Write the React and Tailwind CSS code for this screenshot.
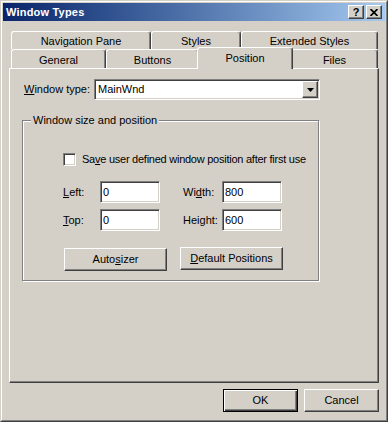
import React from "react";

const raised =
  "border border-t-white border-l-white border-r-[#404040] border-b-[#404040] shadow-[inset_-1px_-1px_0_#808080]";
const sunken =
  "border border-t-[#808080] border-l-[#808080] border-r-white border-b-white shadow-[inset_1px_1px_0_#404040,inset_-1px_-1px_0_#d4d0c8]";

function U({ children }) {
  return <span className="underline underline-offset-[1px] decoration-1">{children}</span>;
}

function Tab({ className, children }) {
  return (
    <div
      className={`${className} flex items-center justify-center pt-[2px] border-l border-t border-r border-l-white border-t-white border-r-[#404040] shadow-[inset_-1px_0_0_#808080] rounded-t-[3px]`}
    >
      {children}
    </div>
  );
}

function Btn({ className, children }) {
  return (
    <div className={`${className} h-[23px] bg-[#d4d0c8] ${raised} flex items-center justify-center`}>
      {children}
    </div>
  );
}

function Edit({ value }) {
  return (
    <div className={`w-[60px] h-[22px] bg-white ${sunken} flex items-center pl-[2px]`}>{value}</div>
  );
}

export default function App() {
  return (
    <div className="w-[388px] h-[422px] bg-[#d4d0c8] border border-t-[#d4d0c8] border-l-[#d4d0c8] border-r-[#404040] border-b-[#404040] font-['Liberation_Sans',Arial,sans-serif] text-[11px] leading-[13px] text-black select-none">
      <div className="h-full border border-t-white border-l-white border-r-[#808080] border-b-[#808080] p-px flex flex-col">
        {/* Title bar */}
        <div className="h-[18px] shrink-0 flex items-center bg-linear-to-r from-[#0a246a] to-[#a6caf0] pl-[3px] pr-[3px]">
          <span className="flex-1 font-bold text-white text-[11px] tracking-[0.2px]">Window Types</span>
          <div className={`w-[16px] h-[14px] bg-[#d4d0c8] ${raised} flex items-center justify-center font-bold text-[11px] leading-none`}>
            ?
          </div>
          <div className={`ml-[2px] w-[16px] h-[14px] bg-[#d4d0c8] ${raised} flex items-center justify-center`}>
            <svg width="8" height="7" viewBox="0 0 8 7">
              <path d="M0.5 0 L7.5 7 M7.5 0 L0.5 7" stroke="black" strokeWidth="1.7" />
            </svg>
          </div>
        </div>

        {/* Tabs row 1 */}
        <div className="mt-[10px] ml-[8px] flex h-[18px] shrink-0">
          <Tab className="w-[140px] h-[18px]">Navigation Pane</Tab>
          <Tab className="w-[90px] h-[18px]">Styles</Tab>
          <Tab className="w-[137px] h-[18px]">Extended Styles</Tab>
        </div>
        {/* Tabs row 2 */}
        <div className="ml-[8px] flex h-[19px] items-start shrink-0">
          <Tab className="w-[95px] h-[19px]">General</Tab>
          <Tab className="w-[93px] h-[19px]">Buttons</Tab>
          <div className="relative z-10 -mt-[2px] -mx-[2px] w-[96px] h-[22px] bg-[#d4d0c8] flex items-start justify-center pt-[4px] border-l border-t border-r border-l-white border-t-white border-r-[#404040] shadow-[inset_-1px_0_0_#808080] rounded-t-[3px]">
            Position
          </div>
          <Tab className="w-[87px] h-[19px]">Files</Tab>
        </div>

        {/* Panel */}
        <div className="ml-[6px] w-[370px] h-[315px] shrink-0 border border-t-white border-l-white border-r-[#404040] border-b-[#404040] shadow-[inset_-1px_-1px_0_#808080] flex flex-col">
          <div className="mt-[10px] ml-[14px] flex items-center h-[21px]">
            <div className="w-[70px]">
              <U>W</U>indow type:
            </div>
            <div className={`w-[226px] h-[21px] p-px bg-white ${sunken} flex items-center`}>
              <span className="flex-1 pl-[2px]">MainWnd</span>
              <div className={`w-[16px] h-[17px] bg-[#d4d0c8] ${raised} flex items-center justify-center`}>
                <svg width="7" height="4" viewBox="0 0 7 4">
                  <path d="M0 0 H7 L3.5 4 Z" fill="black" />
                </svg>
              </div>
            </div>
          </div>

          {/* Group box */}
          <div className="relative mt-[20px] ml-[12px] w-[297px] h-[161px] border border-[#808080] shadow-[inset_1px_1px_0_#fff,1px_1px_0_#fff] flex flex-col pl-[40px]">
            <span className="absolute left-[8px] -top-[7px] px-[2px] bg-[#d4d0c8]">Window size and position</span>

            <div className="mt-[32px] flex items-center h-[13px]">
              <div className={`w-[13px] h-[13px] shrink-0 bg-white ${sunken}`} />
              <span className="ml-[6px] whitespace-nowrap tracking-[-0.25px]">
                Sa<U>v</U>e user defined window position after first use
              </span>
            </div>

            <div className="mt-[15px] flex items-center h-[22px]">
              <div className="w-[37px]">
                <U>L</U>eft:
              </div>
              <Edit value="0" />
              <div className="ml-[23px] w-[39px]">
                Wi<U>d</U>th:
              </div>
              <Edit value="800" />
            </div>

            <div className="mt-[6px] flex items-center h-[22px]">
              <div className="w-[37px]">
                <U>T</U>op:
              </div>
              <Edit value="0" />
              <div className="ml-[23px] w-[39px]">
                Hei<U>g</U>ht:
              </div>
              <Edit value="600" />
            </div>

            <div className="mt-[16px] flex items-start">
              <Btn className="mt-[1px] ml-[1px] w-[103px]">
                <span>
                  Auto<U>s</U>izer
                </span>
              </Btn>
              <Btn className="ml-[13px] w-[103px]">
                <span>
                  <U>D</U>efault Positions
                </span>
              </Btn>
            </div>
          </div>
        </div>

        {/* Bottom buttons */}
        <div className="mt-[6px] flex justify-end pr-[6px] gap-[6px]">
          <div className="w-[75px] h-[23px] border border-black shadow-[inset_1px_1px_0_#fff,inset_-1px_-1px_0_#404040,inset_-2px_-2px_0_#808080] flex items-center justify-center">
            OK
          </div>
          <Btn className="w-[75px]">Cancel</Btn>
        </div>
      </div>
    </div>
  );
}
